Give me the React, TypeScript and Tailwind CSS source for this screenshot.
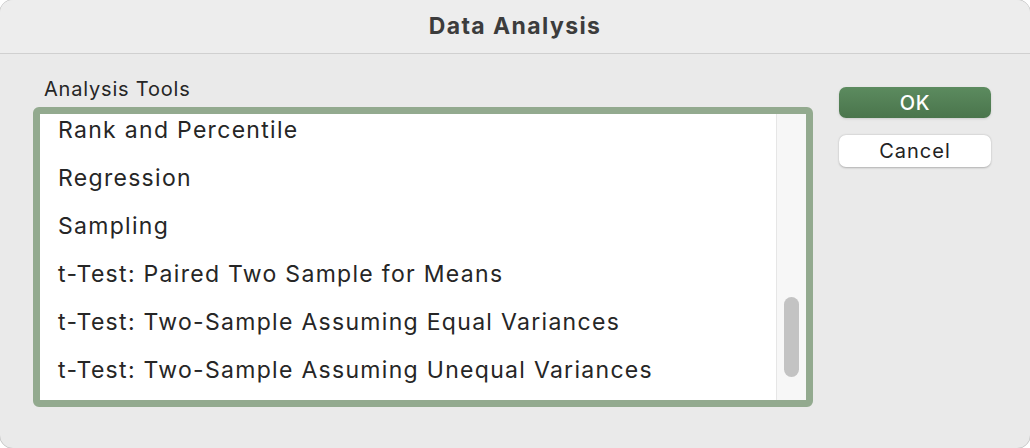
const tools = [
  "Rank and Percentile",
  "Regression",
  "Sampling",
  "t-Test: Paired Two Sample for Means",
  "t-Test: Two-Sample Assuming Equal Variances",
  "t-Test: Two-Sample Assuming Unequal Variances",
];

const font = { fontFamily: "Inter, 'Liberation Sans', sans-serif" };

export default function App() {
  return (
    <div className="h-[448px] w-[1030px] overflow-hidden bg-white" style={font}>
      <div className="-ml-px -mt-px h-[450px] w-[1032px] overflow-hidden rounded-[14px] border border-[#c9c9c9] bg-[#eaeaea]">
        <div className="flex h-[54px] items-center justify-center border-b border-[#d0d0d0] bg-[#ededed]">
          <h1 className="text-[23px] font-bold tracking-[1.4px] text-[#3c3c3c]">Data Analysis</h1>
        </div>

        <div className="flex gap-[26px] pl-[33px]">
          <div className="w-[780px]">
            <p className="mb-[6px] mt-[23px] pl-[11px] text-[20px] leading-[24px] tracking-[0.8px] text-[#262626]">
              Analysis Tools
            </p>
            <div className="flex h-[300px] overflow-hidden rounded-[6px] border-[7px] border-[#93aa8f]">
              <ul className="-mt-[8px] flex-1 bg-white">
                {tools.map((tool) => (
                  <li
                    key={tool}
                    className="flex h-[48px] items-center pl-[18px] text-[23px] tracking-[1.3px] text-[#262626]"
                  >
                    {tool}
                  </li>
                ))}
              </ul>
              <div className="w-[30px] border-l border-[#e6e6e6] bg-[#f7f7f7] px-[7px] pt-[183px]">
                <div className="h-[80px] rounded-full bg-[#c3c3c3]" />
              </div>
            </div>
          </div>

          <div className="flex w-[152px] flex-col gap-[17px] pt-[33px]">
            <button className="h-[31px] rounded-[7px] bg-gradient-to-b from-[#5c8b5f] to-[#4a754c] text-[20px] font-medium tracking-[0.8px] text-white shadow-sm">
              OK
            </button>
            <button className="h-[32px] rounded-[7px] bg-white text-[20px] tracking-[1px] text-[#222] shadow-[0_0.5px_2px_rgba(0,0,0,0.25)]">
              Cancel
            </button>
          </div>
        </div>
      </div>
    </div>
  );
}
